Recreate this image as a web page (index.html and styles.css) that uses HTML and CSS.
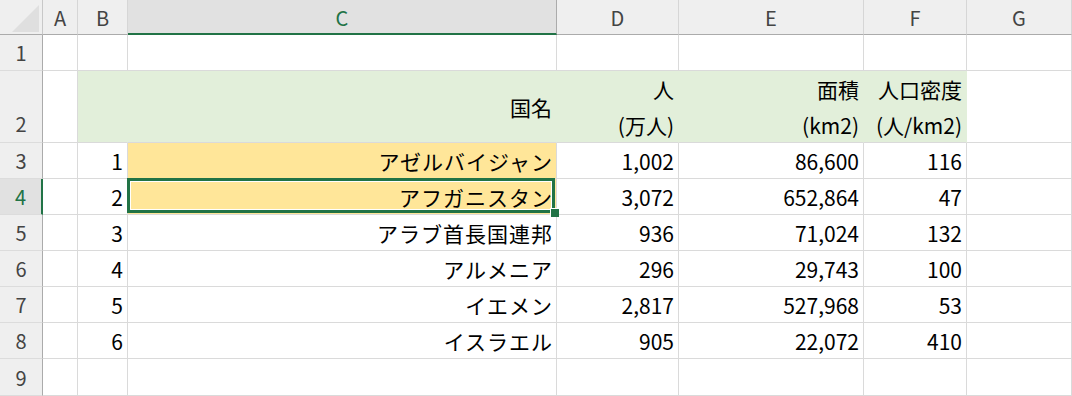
FILE: index.html
```html
<!DOCTYPE html>
<html lang="ja">
<head>
<meta charset="utf-8">
<title>Sheet</title>
<link rel="stylesheet" href="styles.css">
</head>
<body>
<div class="sheet">
  <div class="corner"><svg width="42" height="34" viewBox="0 0 42 34"><polygon points="12,32 39,5 39,32" fill="#dfdfdf"/></svg></div>
  <div class="ch">A</div>
  <div class="ch">B</div>
  <div class="ch ch-sel">C</div>
  <div class="ch">D</div>
  <div class="ch">E</div>
  <div class="ch">F</div>
  <div class="ch">G</div>

  <div class="rh">1</div>
  <div class="c"></div><div class="c"></div><div class="c"></div><div class="c"></div><div class="c"></div><div class="c"></div><div class="c"></div>

  <div class="rh rh-tall">2</div>
  <div class="c"></div>
  <div class="c g"></div>
  <div class="c g"><span>国名</span></div>
  <div class="c g"><span>人<br>(万人)</span></div>
  <div class="c g"><span>面積<br>(km2)</span></div>
  <div class="c g"><span>人口密度<br>(人/km2)</span></div>
  <div class="c"></div>

  <div class="rh">3</div>
  <div class="c"></div>
  <div class="c"><span>1</span></div>
  <div class="c y kana"><span>アゼルバイジャン</span></div>
  <div class="c"><span>1,002</span></div>
  <div class="c"><span>86,600</span></div>
  <div class="c"><span>116</span></div>
  <div class="c"></div>

  <div class="rh rh-sel">4</div>
  <div class="c"></div>
  <div class="c"><span>2</span></div>
  <div class="c y kana active"><span>アフガニスタン</span></div>
  <div class="c"><span>3,072</span></div>
  <div class="c"><span>652,864</span></div>
  <div class="c"><span>47</span></div>
  <div class="c"></div>

  <div class="rh">5</div>
  <div class="c"></div>
  <div class="c"><span>3</span></div>
  <div class="c kana"><span>アラブ首長国連邦</span></div>
  <div class="c"><span>936</span></div>
  <div class="c"><span>71,024</span></div>
  <div class="c"><span>132</span></div>
  <div class="c"></div>

  <div class="rh">6</div>
  <div class="c"></div>
  <div class="c"><span>4</span></div>
  <div class="c kana"><span>アルメニア</span></div>
  <div class="c"><span>296</span></div>
  <div class="c"><span>29,743</span></div>
  <div class="c"><span>100</span></div>
  <div class="c"></div>

  <div class="rh">7</div>
  <div class="c"></div>
  <div class="c"><span>5</span></div>
  <div class="c kana"><span>イエメン</span></div>
  <div class="c"><span>2,817</span></div>
  <div class="c"><span>527,968</span></div>
  <div class="c"><span>53</span></div>
  <div class="c"></div>

  <div class="rh">8</div>
  <div class="c"></div>
  <div class="c"><span>6</span></div>
  <div class="c kana"><span>イスラエル</span></div>
  <div class="c"><span>905</span></div>
  <div class="c"><span>22,072</span></div>
  <div class="c"><span>410</span></div>
  <div class="c"></div>

  <div class="rh">9</div>
  <div class="c"></div><div class="c"></div><div class="c"></div><div class="c"></div><div class="c"></div><div class="c"></div><div class="c"></div>
</div>
</body>
</html>
```
FILE: styles.css
```css
* { box-sizing: border-box; }
html, body { margin: 0; padding: 0; background: #fff; overflow: hidden; }
body {
  width: 1072px;
  height: 396px;
  font-family: "Noto Sans CJK JP", "Noto Sans", sans-serif;
  font-size: 21px;
  color: #000;
}
.sheet {
  display: grid;
  grid-template-columns: 43px 35px 50px 429px 122px 185px 103px 105px;
  grid-template-rows: 35px 36px 72px 36px 36px 36px 36px 36px 36px 37px;
  width: 1072px;
  height: 396px;
}
.corner {
  background: #efefef;
  border-right: 1px solid #c8c8c8;
  border-bottom: 1px solid #ababab;
}
.corner svg { display: block; }
.ch {
  background: #efefef;
  border-right: 1px solid #d6d6d6;
  border-bottom: 1px solid #ababab;
  display: flex;
  align-items: center;
  justify-content: center;
  color: #444;
  font-size: 20px;
  padding-top: 1px;
}
.ch-sel {
  background: #e1e1e1;
  color: #217346;
  border-right-color: #ababab;
  border-bottom: 2px solid #217346;
}
.rh {
  background: #efefef;
  border-right: 1px solid #ababab;
  border-bottom: 1px solid #dcdcdc;
  display: flex;
  align-items: center;
  justify-content: center;
  color: #444;
  font-size: 20px;
}
.rh-tall { align-items: flex-end; padding-bottom: 4px; }
.rh-sel {
  background: #e1e1e1;
  color: #217346;
  border-right: 2px solid #217346;
}
.c {
  border-right: 1px solid #dadada;
  border-bottom: 1px solid #dadada;
  display: flex;
  align-items: center;
  justify-content: flex-end;
  padding-right: 4px;
  white-space: nowrap;
}
.c span {
  line-height: 36px;
  text-align: right;
}
.kana { padding-right: 3px; }
.kana span { letter-spacing: 1px; }
.g {
  background: #e2efda;
  border-right-color: transparent;
}
.y {
  background: #ffe699;
}
.active { position: relative; }
.active::after {
  content: "";
  position: absolute;
  left: -1px;
  top: -1px;
  right: 1px;
  bottom: 1px;
  border: 3px solid #217346;
  box-shadow: inset 0 0 0 1px #fff;
  pointer-events: none;
}
.active::before {
  content: "";
  position: absolute;
  right: -3px;
  bottom: -3px;
  width: 8px;
  height: 8px;
  background: #217346;
  border-left: 1px solid #fff;
  border-top: 1px solid #fff;
  z-index: 2;
}
```
